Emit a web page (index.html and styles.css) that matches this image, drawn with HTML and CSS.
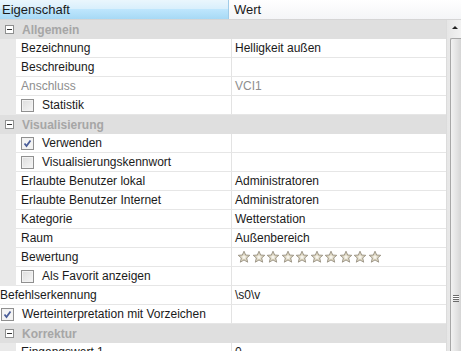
FILE: index.html
```html
<!DOCTYPE html>
<html>
<head>
	<title>Eigenschaften</title>
	<link rel="stylesheet" href="styles.css">
</head>
<body>
	<div class="grid">
		<div class="head">
			<div class="hcol sorted">Eigenschaft</div>
			<div class="hcol">Wert</div>
		</div>

		<div class="body">
			<div class="rows">

				<div class="cat"><span class="toggle"></span>Allgemein</div>
				<div class="row"><div class="name">Bezeichnung</div><div class="value">Helligkeit außen</div></div>
				<div class="row"><div class="name">Beschreibung</div><div class="value"></div></div>
				<div class="row off"><div class="name">Anschluss</div><div class="value">VCI1</div></div>
				<div class="row"><div class="name"><span class="check"></span>Statistik</div><div class="value"></div></div>

				<div class="cat"><span class="toggle"></span>Visualisierung</div>
				<div class="row"><div class="name"><span class="check on"></span>Verwenden</div><div class="value"></div></div>
				<div class="row"><div class="name"><span class="check"></span>Visualisierungskennwort</div><div class="value"></div></div>
				<div class="row"><div class="name">Erlaubte Benutzer lokal</div><div class="value">Administratoren</div></div>
				<div class="row"><div class="name">Erlaubte Benutzer Internet</div><div class="value">Administratoren</div></div>
				<div class="row"><div class="name">Kategorie</div><div class="value">Wetterstation</div></div>
				<div class="row"><div class="name">Raum</div><div class="value">Außenbereich</div></div>
				<div class="row"><div class="name">Bewertung</div><div class="value stars" id="stars"></div></div>
				<div class="row"><div class="name"><span class="check"></span>Als Favorit anzeigen</div><div class="value"></div></div>

				<div class="row flat"><div class="name">Befehlserkennung</div><div class="value">\s0\v</div></div>
				<div class="row flat"><div class="name"><span class="check on"></span>Werteinterpretation mit Vorzeichen</div><div class="value"></div></div>

				<div class="cat"><span class="toggle"></span>Korrektur</div>
				<div class="row"><div class="name">Eingangswert 1</div><div class="value">0</div></div>
			</div>

			<div class="scrollbar">
				<div class="arrow"></div>
				<div class="thumb"><div class="grip"></div></div>
			</div>
		</div>
	</div>

	<script>
		// ten empty rating stars
		const stars = document.getElementById("stars");
		for (let i = 0; i < 10; i++) {
			stars.innerHTML += '<svg class="star" viewBox="0 0 14 14"><path d="M7 1.2 L8.7 5 L12.8 5.3 L9.7 8 L10.7 12.2 L7 10 L3.3 12.2 L4.3 8 L1.2 5.3 L5.3 5 Z"/><path class="inner" d="M7 4.5 L7.8 6.3 L9.6 6.4 L8.2 7.7 L8.7 9.6 L7 8.5 L5.3 9.6 L5.8 7.7 L4.4 6.4 L6.2 6.3 Z"/></svg>';
		}
	</script>
</body>
</html>
```

FILE: styles.css
```css
body {
	margin: 0;
	padding: 0;
	background-color: #fff;
	font-family: "Liberation Sans", Arial, sans-serif;
	font-size: 12px;
	color: #1a1a1a;
}

.grid {
	width: 461px;
	height: 351px;
	overflow: hidden;
}

.head {
	display: flex;
	height: 19px;
	border-bottom: 1px solid #d5d5d5;
}

.hcol {
	flex: 1;
	line-height: 19px;
	padding-left: 5px;
	background: linear-gradient(#ffffff, #f4f5f7);
}

.hcol.sorted {
	flex: none;
	width: 226px;
	padding-left: 2px;
	border-right: 1px solid #9fcbe8;
	background: linear-gradient(#eaf6fd 0%, #d9effc 45%, #bee6fd 50%, #a7d9f5 100%);
	font-size: 13px;
}

.hcol:last-child {
	font-size: 13px;
}

.body {
	display: flex;
}

.rows {
	width: 447px;
}

.cat {
	display: flex;
	align-items: center;
	height: 19px;
	background-color: #dfdfdf;
	color: #a6a6a6;
	font-weight: bold;
}

.toggle {
	position: relative;
	width: 7px;
	height: 7px;
	margin: 0 8px 0 5px;
	border: 1px solid #8e8f8f;
	background: #fff;
}

.toggle::after {
	content: "";
	position: absolute;
	left: 1px;
	top: 3px;
	width: 5px;
	height: 1px;
	background: #333;
}

.row {
	display: flex;
	height: 19px;
	padding-left: 16px;
	background-color: #e9e9e9;
}

.row.flat {
	padding-left: 0;
	background-color: #fff;
}

.name, .value {
	display: flex;
	align-items: center;
	height: 18px;
	border-bottom: 1px solid #e6e6e6;
	background: #fff;
	white-space: nowrap;
}

.name {
	width: 210px;
	padding-left: 5px;
	border-right: 1px solid #e3e3e3;
}

.row.flat .name {
	width: 231px;
	padding-left: 0;
}

.value {
	flex: 1;
	padding-left: 3px;
}

.off .name, .off .value {
	color: #8e8e8e;
}

.check {
	width: 11px;
	height: 11px;
	margin: 0 8px 0 0;
	border: 1px solid #8f8f8f;
	background: linear-gradient(135deg, #dcdcdc, #f6f6f6);
	box-shadow: inset 0 0 0 1px #f2f2f2;
	flex: none;
}

.row.flat .check {
	margin: 0 8px 0 1px;
}

.check.on {
	background: #f4f4f4 url("data:image/svg+xml;utf8,<svg xmlns='http://www.w3.org/2000/svg' viewBox='0 0 11 11'><path d='M2.5 5.5 L4.5 8 L8.5 2.5' fill='none' stroke='%234a5d99' stroke-width='1.8'/></svg>") no-repeat center;
}

.stars {
	padding-left: 5px;
	gap: 0;
}

.star {
	width: 14px;
	height: 14px;
	margin-right: 0.5px;
}

.star path {
	fill: #d9d2bd;
	stroke: #8f8878;
	stroke-width: 0.8;
}

.star path.inner {
	fill: #f7f5ee;
	stroke: none;
}

.scrollbar {
	position: relative;
	width: 14px;
	height: 331px;
	border-left: 1px solid #dcdcdc;
	background: linear-gradient(90deg, #e6e6e6, #f2f2f2);
}

.arrow {
	width: 0;
	height: 0;
	margin: 6px 0 0 5px;
	border-left: 3px solid transparent;
	border-right: 3px solid transparent;
	border-bottom: 3px solid #222;
}

.thumb {
	margin: 9px 0 0 3px;
	height: 330px;
	border: 1px solid #a7a7a7;
	border-right: none;
	border-radius: 2px 0 0 2px;
	background: linear-gradient(90deg, #f2f2f2, #e2e2e2 60%, #d5d5d5);
}

.grip {
	width: 6px;
	height: 5px;
	margin: 256px 0 0 2px;
	border-top: 1px solid #6b6b6b;
	border-bottom: 1px solid #6b6b6b;
	background: linear-gradient(#fff 0 1px, #6b6b6b 1px 2px, #fff 2px 3px, #6b6b6b 3px 4px, transparent 4px);
}
```
